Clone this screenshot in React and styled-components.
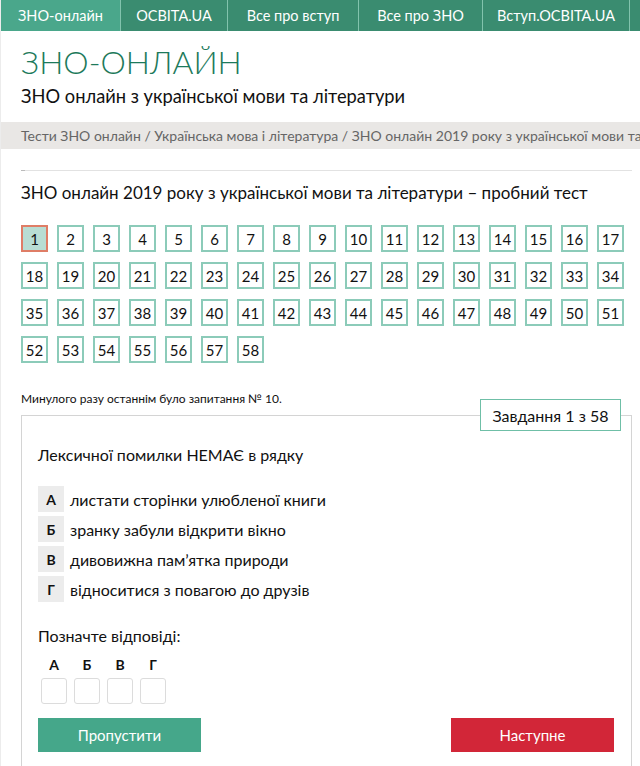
import React from 'react';
import styled, { createGlobalStyle } from 'styled-components';

const GlobalStyle = createGlobalStyle`
  html, body {
    margin: 0;
    padding: 0;
    background: #fff;
  }
  body {
    font-family: Lato, "Noto Sans", sans-serif;
    color: #111;
    overflow: hidden;
  }
`;

const Page = styled.div`
  width: 640px;
  height: 766px;
  overflow: hidden;
  border-left: 1px solid #ececec;
  box-sizing: border-box;
`;

const TopNav = styled.nav`
  display: flex;
  height: 31px;
  background: #3a8c70;
  white-space: nowrap;
  overflow: hidden;
`;

const NavItem = styled.a`
  display: flex;
  align-items: center;
  justify-content: center;
  flex-shrink: 0;
  width: ${({ $w }) => $w}px;
  height: 100%;
  box-sizing: border-box;
  border-right: 1px solid #82c3ad;
  color: #fff;
  font-size: 14.5px;
  text-decoration: none;
  background: ${({ $active }) => ($active ? '#4aa78b' : 'transparent')};
`;

const Header = styled.header`
  padding: 10px 20px 0 20px;
  height: 91px;
  box-sizing: border-box;
`;

const SiteTitle = styled.h1`
  margin: 0;
  font-weight: 300;
  font-size: 32px;
  line-height: 42px;
  color: #1d7a5b;
`;

const SiteSubtitle = styled.p`
  margin: 2px 0 0;
  font-size: 18.3px;
  line-height: 22px;
  color: #111;
`;

const Breadcrumbs = styled.div`
  height: 27px;
  display: flex;
  align-items: center;
  padding-left: 20px;
  background: #e9e7e5;
  color: #666;
  font-size: 14px;
  white-space: nowrap;
  overflow: hidden;
`;

const Content = styled.main`
  padding: 21px 8px 0 20px;
`;

const Divider = styled.hr`
  margin: 0;
  border: 0;
  height: 1px;
  background: linear-gradient(to right, #bbb 0 4px, #e2e2e2 4px);
`;

const TestTitle = styled.h2`
  margin: 11px 0 0;
  font-weight: 400;
  font-size: 17px;
  line-height: 22px;
`;

const Grid = styled.div`
  display: grid;
  grid-template-columns: repeat(17, 27px);
  column-gap: 9px;
  row-gap: 10px;
  margin-top: 21px;
`;

const QBox = styled.span`
  display: flex;
  align-items: center;
  justify-content: center;
  width: 27px;
  height: 27px;
  box-sizing: border-box;
  border: 2px solid ${({ $current }) => ($current ? '#df7d66' : '#8ccbb9')};
  background: ${({ $current }) => ($current ? '#b8ddd3' : '#fff')};
  font-size: 15px;
  color: #111;
`;

const LastNote = styled.p`
  margin: 28px 0 0;
  font-size: 12px;
  line-height: 16px;
`;

const TaskPanel = styled.section`
  position: relative;
  margin-top: 8px;
  border: 1px solid #d4d4d4;
  border-bottom: 0;
  padding: 28px 0 0 16px;
  height: 400px;
`;

const TaskBadge = styled.div`
  position: absolute;
  top: -17px;
  right: 10px;
  width: 141px;
  height: 32px;
  box-sizing: border-box;
  border: 1px solid #6fbfa7;
  background: #fff;
  display: flex;
  align-items: center;
  justify-content: center;
  font-size: 16px;
`;

const Question = styled.p`
  margin: 0;
  font-size: 16px;
  line-height: 22px;
`;

const Options = styled.ul`
  list-style: none;
  margin: 20px 0 0;
  padding: 0;
  display: flex;
  flex-direction: column;
  gap: 4px;
`;

const Option = styled.li`
  display: flex;
  align-items: center;
  gap: 6px;
  font-size: 16px;
`;

const Letter = styled.span`
  width: 26px;
  height: 26px;
  display: flex;
  align-items: center;
  justify-content: center;
  background: #ececec;
  font-weight: 700;
  font-size: 14px;
`;

const AnswerLabel = styled.p`
  margin: 24px 0 0;
  font-size: 16px;
  line-height: 20px;
`;

const AnswerGrid = styled.div`
  display: flex;
  gap: 7px;
  margin-top: 11px;
  padding-left: 3px;
`;

const AnswerCol = styled.div`
  display: flex;
  flex-direction: column;
  align-items: center;
  gap: 5px;
`;

const AnswerLetter = styled.span`
  font-weight: 700;
  font-size: 14px;
  line-height: 16px;
`;

const AnswerInput = styled.span`
  width: 26px;
  height: 26px;
  box-sizing: border-box;
  border: 1px solid #dcdcdc;
  border-radius: 3px;
`;

const Actions = styled.div`
  display: flex;
  justify-content: space-between;
  margin-top: 14px;
  padding-right: 17px;
`;

const Button = styled.button`
  width: 163px;
  height: 34px;
  border: 0;
  color: #fff;
  font-family: inherit;
  font-size: 15px;
  background: ${({ $variant }) => ($variant === 'next' ? '#d22638' : '#45a78a')};
`;

const navItems = [
  { label: 'ЗНО-онлайн', w: 120, active: true },
  { label: 'ОСВІТА.UA', w: 107 },
  { label: 'Все про вступ', w: 131 },
  { label: 'Все про ЗНО', w: 124 },
  { label: 'Вступ.ОСВІТА.UA', w: 147 },
  { label: '', w: 130 },
];

const options = [
  ['А', 'листати сторінки улюбленої книги'],
  ['Б', 'зранку забули відкрити вікно'],
  ['В', 'дивовижна пам’ятка природи'],
  ['Г', 'відноситися з повагою до друзів'],
];

export default function App() {
  const nums = Array.from({ length: 58 }, (_, i) => i + 1);
  return (
    <Page>
      <GlobalStyle />
      <TopNav>
        {navItems.map((n, i) => (
          <NavItem key={i} $w={n.w} $active={n.active}>
            {n.label}
          </NavItem>
        ))}
      </TopNav>
      <Header>
        <SiteTitle>ЗНО-ОНЛАЙН</SiteTitle>
        <SiteSubtitle>ЗНО онлайн з української мови та літератури</SiteSubtitle>
      </Header>
      <Breadcrumbs>
        Тести ЗНО онлайн / Українська мова і література / ЗНО онлайн 2019 року з української мови та літератури
      </Breadcrumbs>
      <Content>
        <Divider />
        <TestTitle>ЗНО онлайн 2019 року з української мови та літератури – пробний тест</TestTitle>
        <Grid>
          {nums.map((n) => (
            <QBox key={n} $current={n === 1}>
              {n}
            </QBox>
          ))}
        </Grid>
        <LastNote>Минулого разу останнім було запитання № 10.</LastNote>
        <TaskPanel>
          <TaskBadge>Завдання 1 з 58</TaskBadge>
          <Question>Лексичної помилки НЕМАЄ в рядку</Question>
          <Options>
            {options.map(([l, t]) => (
              <Option key={l}>
                <Letter>{l}</Letter>
                {t}
              </Option>
            ))}
          </Options>
          <AnswerLabel>Позначте відповіді:</AnswerLabel>
          <AnswerGrid>
            {options.map(([l]) => (
              <AnswerCol key={l}>
                <AnswerLetter>{l}</AnswerLetter>
                <AnswerInput />
              </AnswerCol>
            ))}
          </AnswerGrid>
          <Actions>
            <Button>Пропустити</Button>
            <Button $variant="next">Наступне</Button>
          </Actions>
        </TaskPanel>
      </Content>
    </Page>
  );
}
